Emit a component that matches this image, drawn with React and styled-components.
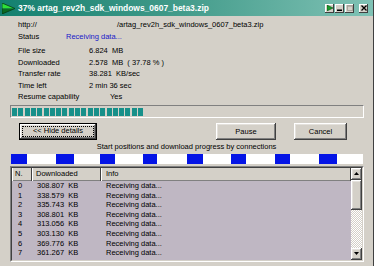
import styled, { createGlobalStyle, css } from "styled-components";

const GlobalStyle = createGlobalStyle`
  html, body {
    margin: 0;
    padding: 0;
    background: #d4d0c8;
  }
  body {
    font-family: "Liberation Sans", Arial, sans-serif;
  }
`;

const raised = css`
  box-shadow: inset -1px -1px #404040, inset 1px 1px #ffffff,
    inset -2px -2px #808080, inset 2px 2px #e4e1dc;
`;

const Window = styled.div`
  width: 374px;
  height: 266px;
  box-sizing: border-box;
  background: #d4d0c8;
  overflow: hidden;
  display: flex;
  flex-direction: column;
  border-right: 1px solid #404040;
  font-size: 7.5px;
  color: #000;
`;

const TitleBar = styled.div`
  height: 16px;
  flex: none;
  display: flex;
  align-items: center;
  padding: 0 5px 0 2px;
  background: linear-gradient(90deg, #13806f 0%, #3f9988 45%, #80c2b5 100%);
  color: #fff;
  font-weight: bold;
  font-size: 8.45px;
  white-space: nowrap;
`;

const TitleText = styled.span`
  margin-left: 3px;
`;

const TitleButtons = styled.div`
  margin-left: auto;
  display: flex;
  align-items: center;
  gap: 1px;
`;

const TitleButton = styled.div`
  width: 9px;
  height: 9px;
  margin-left: ${(p) => p.$gap || 0}px;
  background: #d4d0c8;
  box-shadow: inset -1px -1px #404040, inset 1px 1px #ffffff;
  display: flex;
  align-items: center;
  justify-content: center;
`;

const Info = styled.div`
  padding: 3px 0 0 18px;
`;

const Group = styled.div`
  margin-bottom: ${(p) => p.$gap}px;
`;

const Row = styled.div`
  display: grid;
  grid-template-columns: ${(p) => p.$col}px auto;
  height: ${(p) => p.$h}px;
  line-height: ${(p) => p.$h}px;
  white-space: pre;
`;

const Value = styled.span`
  color: ${(p) => (p.$accent ? "#1818c8" : "#000")};
`;

const ProgressTrack = styled.div`
  margin: 0 9px 0 10px;
  height: 13px;
  box-sizing: border-box;
  border: 1px solid;
  border-color: #808080 #ffffff #ffffff #808080;
  padding: 2px 1px 1px;
`;

const ProgressFill = styled.div`
  height: 100%;
  background: repeating-linear-gradient(
    90deg,
    #17908a 0 5px,
    transparent 5px 6.3px
  );
`;

const ButtonRow = styled.div`
  display: flex;
  align-items: flex-start;
  margin-top: 5px;
  padding: 0 26px 0 19px;
  gap: 18px;
`;

const Button = styled.div`
  width: ${(p) => p.$w}px;
  height: 17px;
  box-sizing: border-box;
  margin-left: ${(p) => (p.$push ? "auto" : "0")};
  color: #000;
  background: #d4d0c8;
  display: flex;
  align-items: center;
  justify-content: center;
  white-space: nowrap;
  ${raised}
  ${(p) =>
    p.$default &&
    css`
      border: 1px solid #000;
      padding: 3px;
      align-items: stretch;
    `}
`;

const FocusLabel = styled.div`
  flex: 1;
  display: flex;
  align-items: center;
  justify-content: center;
  outline: 1px dotted #000;
  line-height: 8px;
`;

const Caption = styled.div`
  margin-top: 2px;
  height: 10px;
  line-height: 10px;
  text-align: center;
`;

const ConnBar = styled.div`
  margin: 2px 10px 0 11px;
  height: 10px;
  display: flex;
  background: #fff;
`;

const Conn = styled.div`
  width: ${(p) => p.$w}px;
  flex: none;
  display: flex;
`;

const ConnDone = styled.div`
  width: ${(p) => p.$w}px;
  background: #0414e6;
`;

const List = styled.div`
  margin: 2px 9px 0 10px;
  height: 96px;
  box-sizing: border-box;
  border: 1px solid;
  border-color: #808080 #ffffff #ffffff #808080;
  display: flex;
`;

const ListInner = styled.div`
  flex: 1;
  display: flex;
  border: 1px solid;
  border-color: #404040 #d4d0c8 #d4d0c8 #404040;
  min-width: 0;
`;

const Table = styled.div`
  flex: 1;
  display: flex;
  flex-direction: column;
  background: #bfb7c3;
`;

const cols = css`
  display: grid;
  grid-template-columns: 20px 69px 1fr;
`;

const HeaderRow = styled.div`
  ${cols};
  height: 13px;
  background: #d4d0c8;
  box-shadow: inset 0 -1px #808080;
`;

const HeaderCell = styled.div`
  padding-left: ${(p) => p.$pad}px;
  line-height: 12px;
  box-shadow: inset -1px 0 #404040, inset 1px 0 #ffffff;
  white-space: nowrap;
`;

const DataRow = styled.div`
  ${cols};
  height: 9.6px;
  line-height: 9.6px;
  white-space: pre;
`;

const Cell = styled.div`
  padding-left: ${(p) => p.$pad}px;
`;

const Scrollbar = styled.div`
  width: 11px;
  display: flex;
  flex-direction: column;
`;

const ScrollButton = styled.div`
  height: 12px;
  flex: none;
  background: #d4d0c8;
  ${raised}
  display: flex;
  align-items: center;
  justify-content: center;
`;

const Thumb = styled.div`
  height: 30px;
  flex: none;
  background: #d4d0c8;
  ${raised}
`;

const Track = styled.div`
  flex: 1;
  background: repeating-conic-gradient(#ffffff 0 25%, #d4d0c8 0 50%) 0 0 / 2px 2px;
`;

const connections = [
  [45, 16],
  [44, 18],
  [43, 15],
  [44, 14],
  [44, 16],
  [44, 15],
  [44, 15],
  [44, 18],
];

const rows = [
  ["0", "308.807  KB"],
  ["1", "338.579  KB"],
  ["2", "335.743  KB"],
  ["3", "308.801  KB"],
  ["4", "313.056  KB"],
  ["5", "303.130  KB"],
  ["6", "369.776  KB"],
  ["7", "361.267  KB"],
];

const Arrow = ({ down }) => (
  <svg width="5" height="3" viewBox="0 0 5 3">
    <polygon points={down ? "0,0 5,0 2.5,3" : "2.5,0 5,3 0,3"} fill="#000" />
  </svg>
);

export default function App() {
  const percent = 37.78;
  return (
    <>
      <GlobalStyle />
      <Window>
        <TitleBar>
          <svg width="13" height="11" viewBox="0 0 13 11">
            <polygon points="0,0 13,5.5 0,5.5" fill="#2ee03a" />
            <polygon points="0,5.5 13,5.5 0,11" fill="#0b6a22" />
            <polygon points="0,0 13,5.5 0,11" fill="none" stroke="#063c14" strokeWidth="0.8" />
          </svg>
          <TitleText>37% artag_rev2h_sdk_windows_0607_beta3.zip</TitleText>
          <TitleButtons>
            <TitleButton>
              <svg width="6" height="6" viewBox="0 0 6 6">
                <polygon points="0,0 6,3 0,6" fill="#1a9a2a" stroke="#0a4a12" strokeWidth="0.6" />
              </svg>
            </TitleButton>
            <TitleButton>
              <svg width="5" height="6" viewBox="0 0 5 6">
                <rect x="0" y="4.5" width="5" height="1.5" fill="#000" />
              </svg>
            </TitleButton>
            <TitleButton>
              <svg width="6" height="6" viewBox="0 0 6 6">
                <rect x="0.5" y="0.5" width="5" height="5" fill="none" stroke="#a8a49c" />
                <rect x="0.5" y="0.5" width="5" height="1.2" fill="#a8a49c" />
              </svg>
            </TitleButton>
            <TitleButton $gap={4}>
              <svg width="6" height="6" viewBox="0 0 6 6">
                <path d="M0.5 0.5 L5.5 5.5 M5.5 0.5 L0.5 5.5" stroke="#000" strokeWidth="1.3" />
              </svg>
            </TitleButton>
          </TitleButtons>
        </TitleBar>

        <Info>
          <Group $gap={2}>
            <Row $col={99} $h={12}>
              <span>http://</span>
              <Value>/artag_rev2h_sdk_windows_0607_beta3.zip</Value>
            </Row>
            <Row $col={48} $h={12}>
              <span>Status</span>
              <Value $accent>Receiving data...</Value>
            </Row>
          </Group>
          <Group $gap={2}>
            <Row $col={71} $h={11.6}>
              <span>File size</span>
              <Value>6.824  MB</Value>
            </Row>
            <Row $col={71} $h={11.6}>
              <span>Downloaded</span>
              <Value>2.578  MB  ( 37.78 % )</Value>
            </Row>
            <Row $col={71} $h={11.6}>
              <span>Transfer rate</span>
              <Value>38.281  KB/sec</Value>
            </Row>
            <Row $col={71} $h={11.6}>
              <span>Time left</span>
              <Value>2 min 36 sec</Value>
            </Row>
            <Row $col={92} $h={11.6}>
              <span>Resume capability</span>
              <Value>Yes</Value>
            </Row>
          </Group>
        </Info>

        <ProgressTrack>
          <ProgressFill style={{ width: `${percent}%` }} />
        </ProgressTrack>

        <ButtonRow>
          <Button $w={78} $default>
            <FocusLabel>&lt;&lt; Hide details</FocusLabel>
          </Button>
          <Button $w={60} $push>
            Pause
          </Button>
          <Button $w={53}>Cancel</Button>
        </ButtonRow>

        <Caption>Start positions and download progress by connections</Caption>

        <ConnBar>
          {connections.map(([w, done], i) => (
            <Conn key={i} $w={w}>
              <ConnDone $w={done} />
            </Conn>
          ))}
        </ConnBar>

        <List>
          <ListInner>
            <Table>
              <HeaderRow>
                <HeaderCell $pad={3}>N.</HeaderCell>
                <HeaderCell $pad={4}>Downloaded</HeaderCell>
                <HeaderCell $pad={5}>Info</HeaderCell>
              </HeaderRow>
              {rows.map(([n, kb]) => (
                <DataRow key={n}>
                  <Cell $pad={6}>{n}</Cell>
                  <Cell $pad={5}>{kb}</Cell>
                  <Cell $pad={5}>Receiving data...</Cell>
                </DataRow>
              ))}
            </Table>
            <Scrollbar>
              <ScrollButton>
                <Arrow />
              </ScrollButton>
              <Thumb />
              <Track />
              <ScrollButton>
                <Arrow down />
              </ScrollButton>
            </Scrollbar>
          </ListInner>
        </List>
      </Window>
    </>
  );
}
